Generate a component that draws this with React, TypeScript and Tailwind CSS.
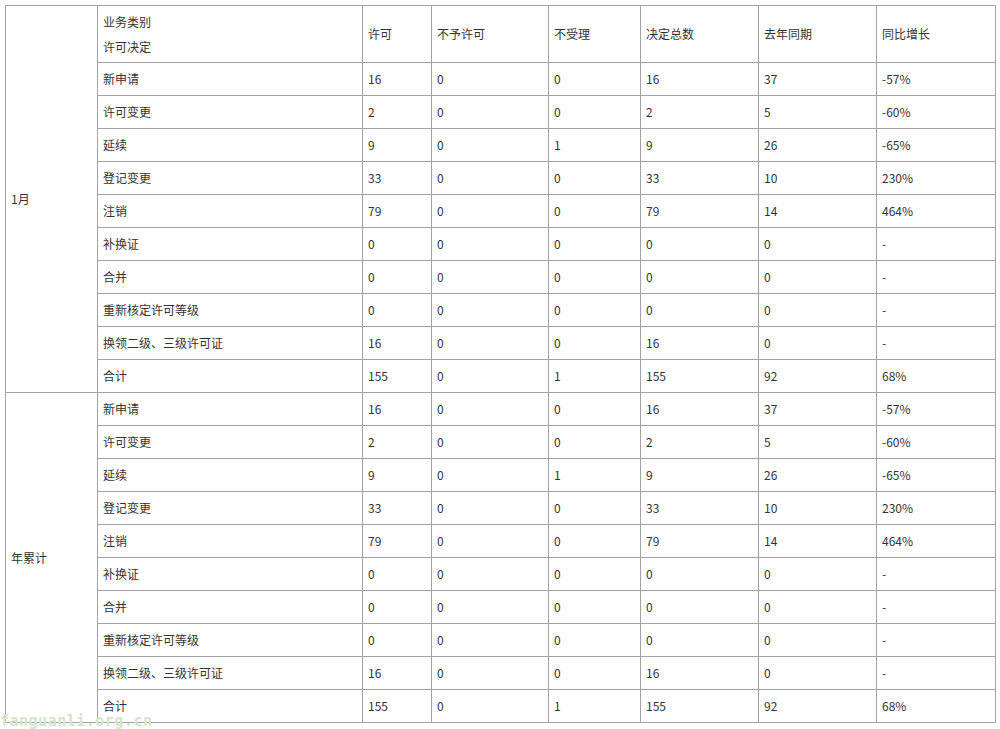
const items = ['新申请', '许可变更', '延续', '登记变更', '注销', '补换证', '合并', '重新核定许可等级', '换领二级、三级许可证', '合计'];

const data: string[][] = [
  ['16', '0', '0', '16', '37', '-57%'],
  ['2', '0', '0', '2', '5', '-60%'],
  ['9', '0', '1', '9', '26', '-65%'],
  ['33', '0', '0', '33', '10', '230%'],
  ['79', '0', '0', '79', '14', '464%'],
  ['0', '0', '0', '0', '0', '-'],
  ['0', '0', '0', '0', '0', '-'],
  ['0', '0', '0', '0', '0', '-'],
  ['16', '0', '0', '16', '0', '-'],
  ['155', '0', '1', '155', '92', '68%'],
];

const heads = ['许可', '不予许可', '不受理', '决定总数', '去年同期', '同比增长'];

const cell = 'border border-[#a3a3a3] px-[5px] align-middle text-left font-normal';

const Section = ({label, withHead}: {label: string; withHead: boolean}) => (
  <>
    {withHead && (
      <tr className="h-[57px]">
        <td rowSpan={11} className={cell}>{label}</td>
        <th className={`${cell} leading-[25px]`}>
          业务类别
          <br />
          许可决定
        </th>
        {heads.map((h) => (
          <th key={h} className={cell}>{h}</th>
        ))}
      </tr>
    )}
    {items.map((name, i) => (
      <tr key={name} className="h-[33px]">
        {!withHead && i === 0 && (
          <td rowSpan={10} className={cell}>{label}</td>
        )}
        <td className={cell}>{name}</td>
        {data[i].map((v, j) => (
          <td key={j} className={cell}>{v}</td>
        ))}
      </tr>
    ))}
  </>
);

export default function App() {
  return (
    <div className="relative w-[1000px] h-[729px] bg-white overflow-hidden">
      <div className="pt-[5px] pl-[5px]">
        <table
          className="table-fixed border-collapse w-[990px] text-[12px] text-[#333] leading-[16px]"
          style={{fontFamily: '"Noto Sans CJK SC", "Liberation Sans", sans-serif'}}
        >
          <colgroup>
            <col className="w-[92px]" />
            <col className="w-[265px]" />
            <col className="w-[69px]" />
            <col className="w-[117px]" />
            <col className="w-[92px]" />
            <col className="w-[118px]" />
            <col className="w-[118px]" />
            <col className="w-[119px]" />
          </colgroup>
          <tbody>
            <Section label="1月" withHead />
            <Section label="年累计" withHead={false} />
          </tbody>
        </table>
      </div>
      {/* watermark */}
      <div className="absolute left-0 top-[715px] text-[15px] font-bold tracking-[0.5px] text-[#d3e6cc] font-['DejaVu_Sans_Mono',monospace] leading-[13px]">
        fanguanli.org.cn
      </div>
    </div>
  );
}
